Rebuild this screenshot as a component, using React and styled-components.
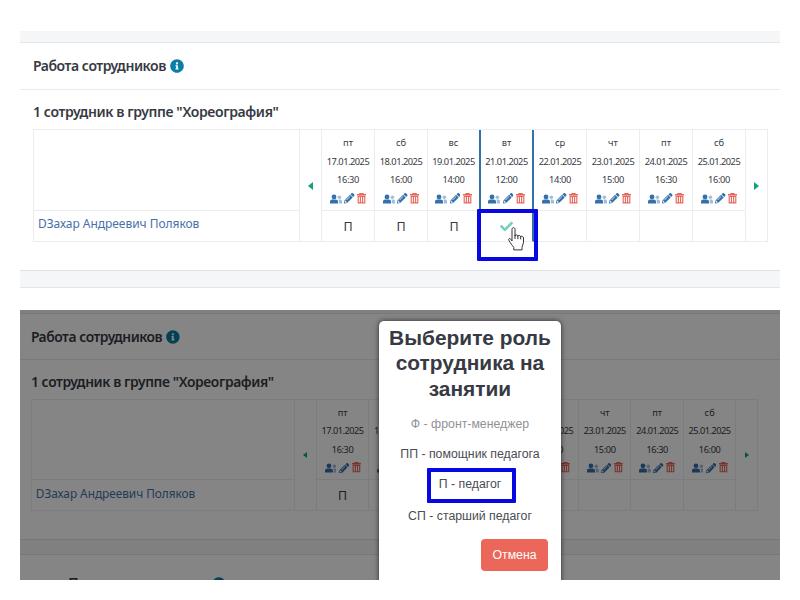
import React from "react";
import styled, { createGlobalStyle, css } from "styled-components";
import { FaInfoCircle, FaPencilAlt, FaCheck } from "react-icons/fa";

const GlobalStyle = createGlobalStyle`
  * { box-sizing: border-box; }
  body { margin: 0; background: #fff; color: #373a43; font-family: "Noto Sans", "Open Sans", sans-serif; }
`;

const Page = styled.main`
  width: 800px;
  height: 600px;
  padding: 31px 20px 20px;
  overflow: hidden;
  background: #fff;
`;

const Shot = styled.section`
  height: 257px;
  overflow: hidden;
`;

const DimmedShot = styled.section`
  position: relative;
  height: 270px;
  margin-top: 22px;
  overflow: hidden;
  background: #fff;
`;

const Scaled = styled.div`
  zoom: 0.9895;
  width: 770px;
`;

const Band = styled.div`
  height: ${(p) => p.$h}px;
  background: #f5f6f8;
  border-bottom: 1px solid #e4e6e8;
`;

const Panel = styled.div`
  height: 228px;
  background: #fff;
  border-bottom: 1px solid #e0e2e5;
`;

const PanelHeader = styled.header`
  height: 47px;
  padding-left: ${(p) => p.$left}px;
  display: flex;
  align-items: center;
  gap: 4px;
  border-bottom: 1px solid #e8eaec;
  svg { color: #0a7ea4; display: block; }
`;

const Title = styled.h2`
  margin: 0;
  font-size: 14px;
  line-height: 20px;
  font-weight: 600;
  white-space: nowrap;
  width: 133px;
  letter-spacing: -0.46px;
`;

const Subtitle = styled.h3`
  margin: 0;
  padding-left: ${(p) => p.$left}px;
  height: 39px;
  padding-top: 12px;
  font-size: 14px;
  line-height: 20px;
  font-weight: 600;
  white-space: nowrap;
  letter-spacing: -0.39px;
`;

const Table = styled.div`
  display: grid;
  grid-template-columns: 266px 22px repeat(8, 53px) 22px;
  grid-template-rows: 81px 31px;
  width: 735px;
  height: 113px;
  margin-left: ${(p) => p.$left}px;
  border-top: 1px solid #ebedef;
  border-left: 1px solid #ebedef;
`;

const Cell = styled.div`
  border-right: 1px solid #ebedef;
  border-bottom: 1px solid #ebedef;
  display: flex;
  align-items: center;
  justify-content: center;
  font-size: 12.5px;
  ${(p) => p.$mark && css`border-right: 2px solid #3470ac;`}
`;

const ArrowCell = styled(Cell)`
  grid-row: 1 / 3;
  grid-column: ${(p) => p.$col};
`;

const NameCell = styled(Cell)`
  grid-column: 1;
  grid-row: 2;
  justify-content: flex-start;
  padding: 0 0 5px 4px;
  color: #4771a8;
  font-size: 12px;
  letter-spacing: -0.04px;
  white-space: nowrap;
`;

const DayCell = styled(Cell)`
  flex-direction: column;
  justify-content: flex-start;
  padding-top: 4px;
  line-height: 18.5px;
  font-size: 9.3px;
  white-space: nowrap;
`;

const DateText = styled.span`
  letter-spacing: -0.5px;
`;

const TimeText = styled.span`
  letter-spacing: -0.4px;
`;

const Actions = styled.div`
  height: 18px;
  display: flex;
  align-items: center;
  gap: 2.5px;
  svg { display: block; }
`;

const Arrow = styled.i`
  width: 0;
  height: 0;
  border: 4px solid transparent;
  ${(p) => p.$next
    ? css`border-left: 5px solid #0ca37f; border-right: 0;`
    : css`border-right: 5px solid #0ca37f; border-left: 0;`}
`;

const CheckSpot = styled.div`
  position: relative;
  width: 13px;
  height: 13px;
  color: #7bd0bc;
`;

const Highlight = styled.div`
  position: absolute;
  z-index: 2;
  left: -23px;
  top: -11px;
  width: 61px;
  height: 52px;
  border: 4px solid #0808e2;
  border-radius: 1px;
`;

const Cursor = styled.svg`
  position: absolute;
  z-index: 3;
  left: 8px;
  top: 7px;
`;

const Shade = styled.div`
  position: absolute;
  inset: 0;
  background: rgba(0, 0, 0, 0.48);
`;

const Dialog = styled.div`
  position: absolute;
  left: 359px;
  top: 11px;
  width: 182px;
  height: 270px;
  padding-top: 4px;
  background: #fff;
  border-radius: 5px 5px 0 0;
  box-shadow: 0 0 5px rgba(0, 0, 0, 0.7);
  display: flex;
  flex-direction: column;
  align-items: center;
  font-family: "Liberation Sans", Arial, sans-serif;
`;

const DialogTitle = styled.h1`
  margin: 0 0 7px;
  font-size: 20.9px;
  line-height: 25.4px;
  font-weight: 700;
  text-align: center;
  white-space: nowrap;
`;

const Role = styled.div`
  height: 30.7px;
  display: flex;
  align-items: center;
  font-size: 12.3px;
  color: ${(p) => (p.$muted ? "#919296" : "#4b4c54")};
  white-space: nowrap;
`;

const ChosenRole = styled(Role)`
  height: 35px;
  width: 89px;
  margin: -2px 0 -2.3px 2px;
  padding-bottom: 3px;
  padding-right: 2px;
  justify-content: center;
  border: 4px solid #0808e2;
  border-radius: 1px;
`;

const CancelButton = styled.button`
  align-self: flex-end;
  width: 67px;
  height: 32px;
  margin: 8px 13px 0 0;
  padding: 0;
  border: 0;
  border-radius: 4px;
  background: #eb6759;
  color: #fff;
  font: 12.3px "Liberation Sans", Arial, sans-serif;
`;

const NextHeader = styled.div`
  display: flex;
  align-items: flex-start;
  gap: 18px;
  padding: 18px 0 0 27px;
  font-size: 14px;
  line-height: 20px;
  font-weight: 600;
  svg { color: #0a7ea4; margin: 3.5px 0 0 -18px; }
`;

const NextTitle = styled.span`
  width: 145px;
  white-space: nowrap;
`;

const days = [
  ["пт", "17.01.2025", "16:30", "П"],
  ["сб", "18.01.2025", "16:00", "П"],
  ["вс", "19.01.2025", "14:00", "П"],
  ["вт", "21.01.2025", "12:00", ""],
  ["ср", "22.01.2025", "14:00", ""],
  ["чт", "23.01.2025", "15:00", ""],
  ["пт", "24.01.2025", "16:30", ""],
  ["сб", "25.01.2025", "16:00", ""],
];

function UsersIcon() {
  return (
    <svg width="12" height="10" viewBox="0 0 12 10" fill="#3470ac">
      <circle cx="4" cy="2.9" r="2.4" />
      <path d="M0 9.5V8C0 6.3 1 5.6 2.3 5.6h3.3C7 5.6 8 6.3 8 8v1.5Z" />
      <g opacity=".45">
        <circle cx="9.4" cy="3.2" r="1.8" />
        <path d="M8.4 5.6h1.8c1.2 0 1.8.7 1.8 1.8v2.1H8.8V7.4c0-.8-.1-1.3-.4-1.8Z" />
      </g>
    </svg>
  );
}

function TrashIcon() {
  return (
    <svg width="9" height="11" viewBox="0 0 9 11" fill="none" stroke="#e8685e">
      <path d="M0 1.8h9M3 1.2V.6h3v.6" strokeWidth="1.4" />
      <path d="M1.2 3.4h6.6v6.5H1.2ZM3.4 3.5v6M5.6 3.5v6" strokeWidth="1.15" />
    </svg>
  );
}

function HandCursor() {
  return (
    <Cursor width="17" height="24" viewBox="0 0 17 24" fill="#fff" stroke="#333" strokeWidth="1" strokeLinejoin="round">
      <path d="M4 14V2.4C4 .1 7 .1 7 2.4V9c0-1.5 2.7-1.5 2.9.3 0-1.3 2.6-1.2 2.8.6.2-1.1 2.7-.8 2.8.9v4.4c0 2.2-1.3 3-1.5 5.1v2.6H5.8v-2.5C4.2 18.4 2.5 16.3.8 13.1.2 11.4 2 11 3 12.4Z" />
      <path d="M7 8v4M9.9 9v3.2M12.7 9.7v2.7" />
    </Cursor>
  );
}

function Schedule({ left, active }) {
  return (
    <Table $left={left}>
      <Cell />
      <NameCell>DЗахар Андреевич Поляков</NameCell>
      <ArrowCell $col={2}><Arrow /></ArrowCell>
      {days.map(([day, date, time], i) => (
        <DayCell key={date} $mark={active && (i === 2 || i === 3)} style={{ gridColumn: i + 3, gridRow: 1 }}>
          <span>{day}</span>
          <DateText>{date}</DateText>
          <TimeText>{time}</TimeText>
          <Actions><UsersIcon /><FaPencilAlt size={10.5} color="#3470ac" /><TrashIcon /></Actions>
        </DayCell>
      ))}
      {days.map(([, date, , role], i) => (
        <Cell key={date} $mark={active && i === 3} style={{ gridColumn: i + 3, gridRow: 2 }}>
          {active && i === 3
            ? <CheckSpot><FaCheck size={13} /><Highlight /><HandCursor /></CheckSpot>
            : role}
        </Cell>
      ))}
      <ArrowCell $col={11}><Arrow $next /></ArrowCell>
    </Table>
  );
}

function StaffPanel({ left, active }) {
  return (
    <Panel>
      <PanelHeader $left={left}>
        <Title>Работа сотрудников</Title>
        <FaInfoCircle size={14} />
      </PanelHeader>
      <Subtitle $left={left}>1 сотрудник в группе "Хореография"</Subtitle>
      <Schedule left={left} active={active} />
    </Panel>
  );
}

export default function App() {
  return (
    <>
      <GlobalStyle />
      <Page>
        <Shot>
          <Band $h={12} />
          <StaffPanel left={13} active />
          <Band $h={17} />
        </Shot>
        <DimmedShot>
          <Scaled>
            <Band $h={4} />
            <StaffPanel left={11} />
            <Band $h={16} />
            <NextHeader><span>·</span><NextTitle>Посещаемость</NextTitle><FaInfoCircle size={14} /></NextHeader>
          </Scaled>
          <Shade />
          <Dialog>
            <DialogTitle>Выберите роль<br />сотрудника на<br />занятии</DialogTitle>
            <Role $muted>Ф - фронт-менеджер</Role>
            <Role>ПП - помощник педагога</Role>
            <ChosenRole>П - педагог</ChosenRole>
            <Role>СП - старший педагог</Role>
            <CancelButton>Отмена</CancelButton>
          </Dialog>
        </DimmedShot>
      </Page>
    </>
  );
}
